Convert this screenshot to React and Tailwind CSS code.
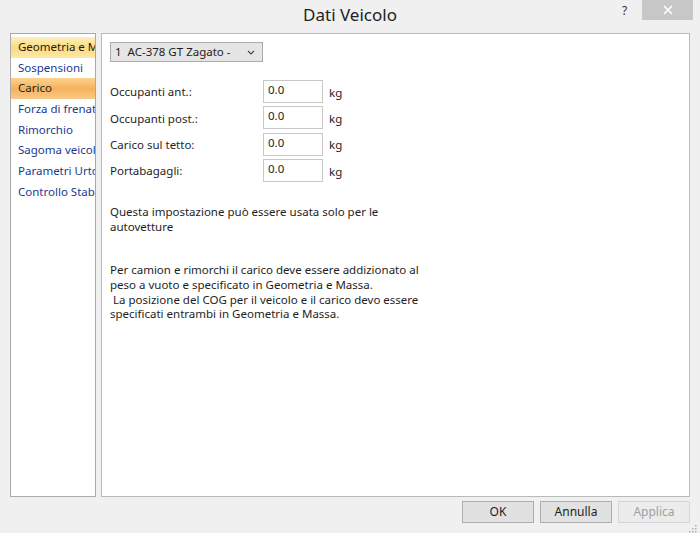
import { useState } from 'react';

const sections = [
  'Geometria e Massa',
  'Sospensioni',
  'Carico',
  'Forza di frenata',
  'Rimorchio',
  'Sagoma veicolo',
  'Parametri Urto',
  'Controllo Stabilità',
];

const loads = [
  { label: 'Occupanti ant.:', value: '0.0' },
  { label: 'Occupanti post.:', value: '0.0' },
  { label: 'Carico sul tetto:', value: '0.0' },
  { label: 'Portabagagli:', value: '0.0' },
];

export default function App() {
  const [active, setActive] = useState(2);

  return (
    <div
      className="w-[700px] h-[533px] bg-[#f0f0f0] text-[#1e1e1e] flex flex-col overflow-hidden"
      style={{ fontFamily: '"Noto Sans", "Open Sans", sans-serif' }}
    >
      {/* Title bar */}
      <div className="relative h-[30px] flex items-center justify-center">
        <span className="text-[17px] text-[#222]">Dati Veicolo</span>
        <span className="absolute left-[622px] top-[2px] text-[12px] text-[#333]">?</span>
        <div className="absolute left-[642px] top-0 w-[51px] h-[20px] bg-[#c7c7c7] flex items-center justify-center">
          <svg width="10" height="10" viewBox="0 0 10 10">
            <path d="M1 1 L9 9 M9 1 L1 9" stroke="#fff" strokeWidth="1.6" />
          </svg>
        </div>
      </div>

      <div className="flex gap-[5px] px-[10px] pt-[3px] h-[467px]">
        {/* Section list */}
        <div className="w-[86px] shrink-0 bg-white border border-[#a9a9a9] overflow-hidden text-[11.5px] pt-[3px]">
          {sections.map((s, i) => (
            <div
              key={s}
              onClick={() => setActive(i)}
              className={`h-[20.7px] pl-[7px] leading-[20px] whitespace-nowrap overflow-hidden cursor-default ${
                i === active
                  ? 'bg-gradient-to-b from-[#fbd38f] via-[#f6b25b] to-[#f9c98a] text-[#1c1c1c]'
                  : i === 0
                  ? 'bg-gradient-to-b from-[#fdf0bf] via-[#fbdb7d] to-[#fde8a8] text-[#1c1c1c]'
                  : 'text-[#1a3a8f]'
              }`}
            >
              {s}
            </div>
          ))}
        </div>

        {/* Page content */}
        <div className="flex-1 bg-white border border-[#b9b9b9] pl-[8px] pt-[8px] text-[11.5px]">
          <div className="w-[153px] h-[20px] bg-[#e5e5e5] border border-[#acacac] flex items-center justify-between pl-[4px] pr-[7px]">
            <span className="whitespace-pre">1  AC-378 GT Zagato -</span>
            <svg width="8" height="5" viewBox="0 0 8 5">
              <path d="M1 1 L4 4 L7 1" stroke="#444" strokeWidth="1.1" fill="none" />
            </svg>
          </div>

          <div className="mt-[18px] flex flex-col gap-[3.3px]">
            {loads.map((l) => (
              <div key={l.label} className="flex items-center h-[23px]">
                <span className="w-[153px] pt-[1px]">{l.label}</span>
                <div className="w-[60px] h-[23px] border border-[#c8c8c8] pl-[4px] leading-[18px]">{l.value}</div>
                <span className="ml-[6px] pt-[2px]">kg</span>
              </div>
            ))}
          </div>

          <p className="mt-[23px] w-[300px] leading-[14.7px]">
            Questa impostazione può essere usata solo per le autovetture
          </p>

          <p className="mt-[29px] w-[320px] leading-[14.7px]">
            Per camion e rimorchi il carico deve essere addizionato al peso a vuoto e specificato in Geometria e Massa.
            <br />
            &nbsp;La posizione del COG per il veicolo e il carico devo essere specificati entrambi in Geometria e Massa.
          </p>
        </div>
      </div>

      {/* Footer buttons */}
      <div className="relative flex justify-end gap-[6px] pr-[10px] pt-[4px] text-[12px]">
        <button className="w-[72px] h-[22px] bg-[#e1e1e1] border border-[#adadad] text-[#1e1e1e]">OK</button>
        <button className="w-[72px] h-[22px] bg-[#e1e1e1] border border-[#adadad] text-[#1e1e1e]">Annulla</button>
        <button className="w-[72px] h-[22px] bg-[#ececec] border border-[#d5d5d5] text-[#a0a0a0]">Applica</button>
        <svg className="absolute right-[3px] bottom-[-10px]" width="8" height="8" viewBox="0 0 8 8">
          <rect x="6" y="0" width="1.5" height="1.5" fill="#b0b0b0" />
          <rect x="6" y="3" width="1.5" height="1.5" fill="#b0b0b0" />
          <rect x="3" y="3" width="1.5" height="1.5" fill="#b0b0b0" />
          <rect x="6" y="6" width="1.5" height="1.5" fill="#b0b0b0" />
          <rect x="3" y="6" width="1.5" height="1.5" fill="#b0b0b0" />
          <rect x="0" y="6" width="1.5" height="1.5" fill="#b0b0b0" />
        </svg>
      </div>
    </div>
  );
}
